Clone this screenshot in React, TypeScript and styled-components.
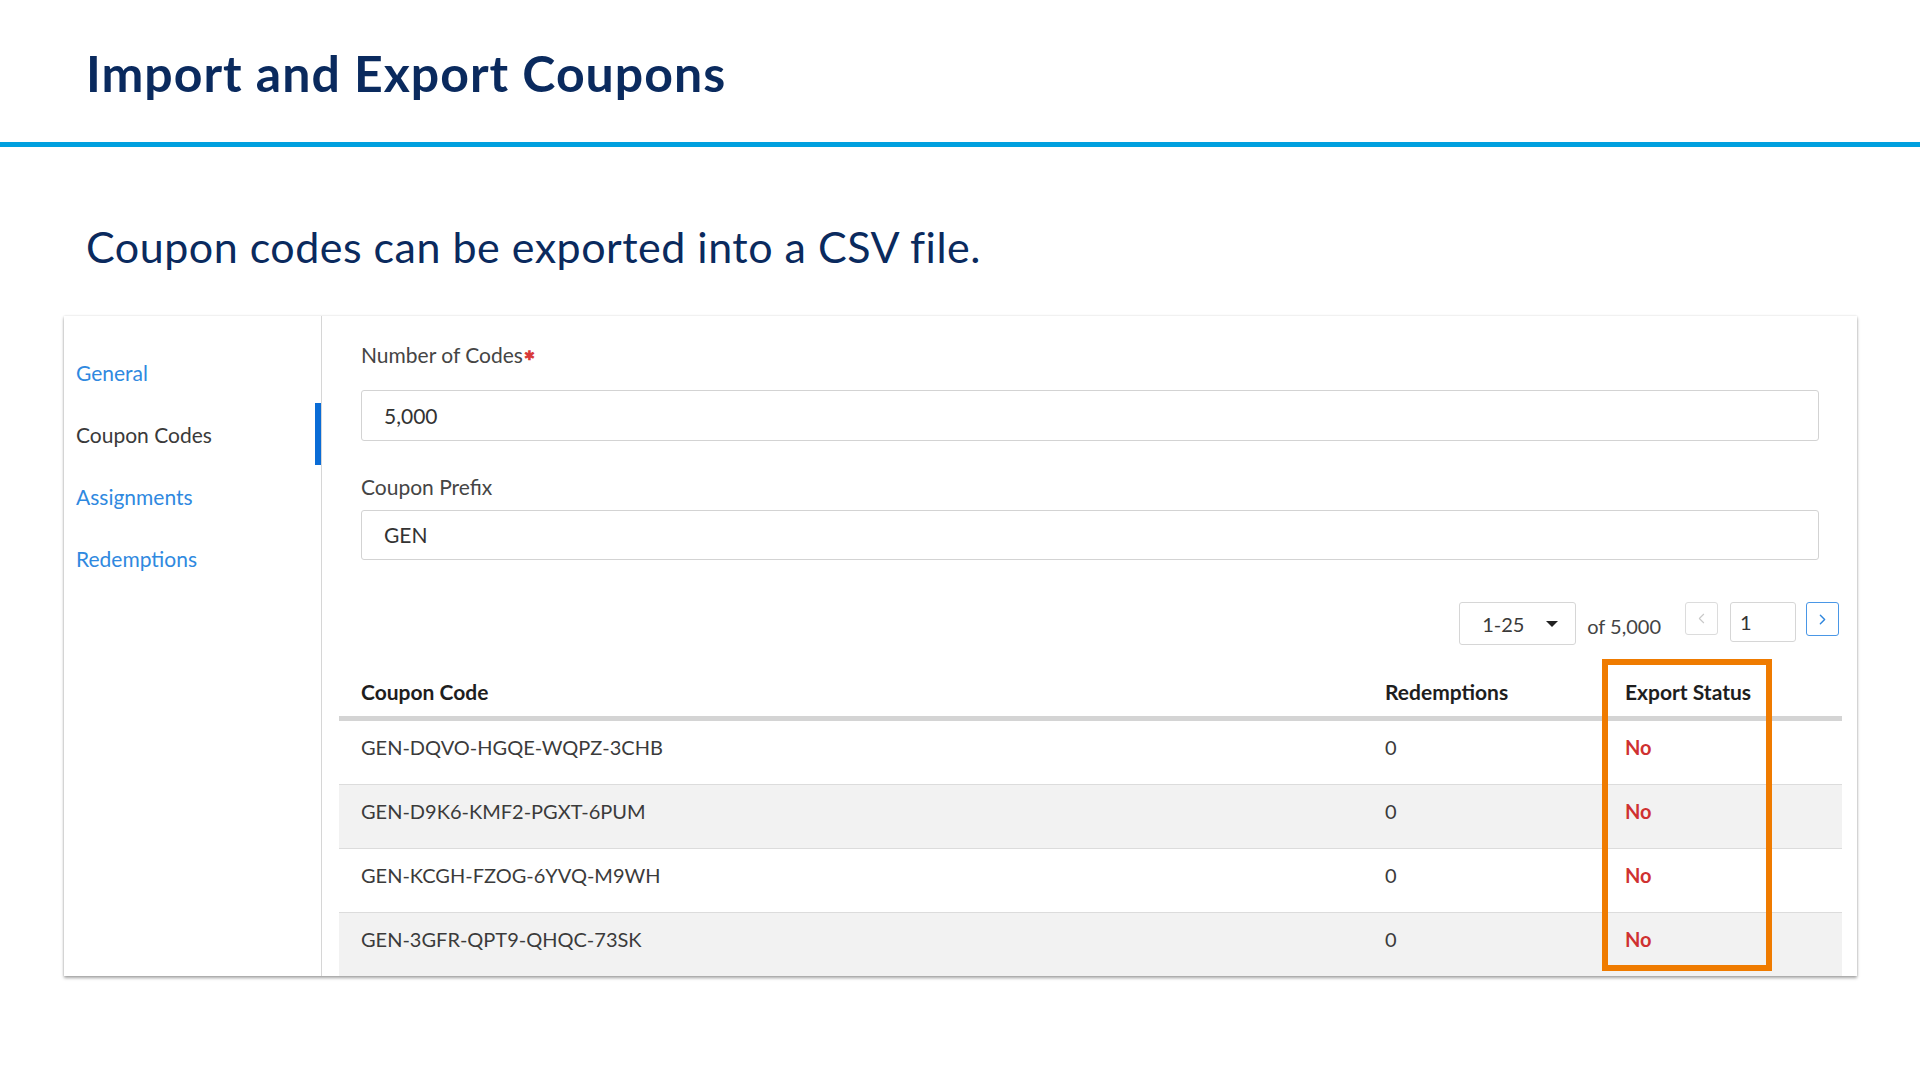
import React from "react";
import styled, { createGlobalStyle } from "styled-components";
import { ChevronLeft, ChevronRight } from "lucide-react";

const GlobalStyle = createGlobalStyle`
  html, body {
    margin: 0;
    padding: 0;
    background: #ffffff;
  }
  body {
    font-family: Lato, "Liberation Sans", sans-serif;
  }
`;

const Page = styled.div`
  width: 1920px;
  height: 1080px;
  overflow: hidden;
  background: #ffffff;
`;

const Header = styled.header`
  box-sizing: border-box;
  height: 147px;
  padding: 43px 0 0 86px;
  border-bottom: 5px solid #00a0df;
`;

const Title = styled.h1`
  margin: 0;
  font-size: 50px;
  line-height: 60px;
  font-weight: 700;
  letter-spacing: 1px;
  color: #0a2a5e;
`;

const Lead = styled.p`
  margin: 74px 0 0 86px;
  font-size: 43px;
  line-height: 52px;
  letter-spacing: 0.5px;
  color: #0a2a5e;
`;

const Card = styled.section`
  display: flex;
  box-sizing: border-box;
  width: 1793px;
  height: 660px;
  margin: 43px 0 0 64px;
  background: #ffffff;
  box-shadow: 0 2px 3px rgba(0, 0, 0, 0.35), 0 0 2px rgba(0, 0, 0, 0.12);
`;

const Sidebar = styled.nav`
  box-sizing: border-box;
  width: 258px;
  padding-top: 25px;
  border-right: 1px solid #d6d6d6;
`;

const NavItem = styled.div<{ $active?: boolean }>`
  box-sizing: border-box;
  height: 62px;
  display: flex;
  align-items: center;
  padding-left: 12px;
  font-size: 21px;
  color: ${({ $active }) => ($active ? "#3a3a3a" : "#2f89e0")};
  border-right: 6px solid ${({ $active }) => ($active ? "#0a6cd6" : "transparent")};
`;

const Main = styled.div`
  flex: 1;
  display: flex;
  flex-direction: column;
  padding: 27px 15px 0 17px;
`;

const FieldLabel = styled.label<{ $gap: number; $top?: number }>`
  display: block;
  margin: ${({ $top }) => $top ?? 0}px 0 ${({ $gap }) => $gap}px 22px;
  font-size: 21px;
  line-height: 24px;
  color: #454545;
`;

const Required = styled.span`
  color: #d83a3a;
  font-size: 13px;
  font-weight: 700;
  vertical-align: 3px;
  margin-left: 1px;
`;

const TextInput = styled.input`
  box-sizing: border-box;
  height: 52px;
  margin: 0 23px 0 22px;
  padding: 0 22px;
  border: 1px solid #d3d3d3;
  border-radius: 3px;
  font: inherit;
  font-size: 21px;
  color: #333333;
  background: #ffffff;
  outline: none;
`;

const Pager = styled.div`
  display: flex;
  justify-content: flex-end;
  align-items: flex-start;
  margin-top: 42px;
  padding-right: 3px;
`;

const RangeSelect = styled.div`
  box-sizing: border-box;
  width: 117px;
  height: 43px;
  display: flex;
  align-items: center;
  gap: 22px;
  padding-left: 22px;
  border: 1px solid #d6d6d6;
  border-radius: 3px;
  font-size: 20px;
  color: #3a3a3a;
`;

const Caret = styled.span`
  width: 0;
  height: 0;
  border-left: 6px solid transparent;
  border-right: 6px solid transparent;
  border-top: 6px solid #222222;
`;

const OfTotal = styled.span`
  margin: 0 24px 0 11px;
  padding-top: 3px;
  line-height: 43px;
  font-size: 20px;
  color: #444444;
`;

const PageButton = styled.div<{ $enabled?: boolean }>`
  box-sizing: border-box;
  width: 33px;
  height: ${({ $enabled }) => ($enabled ? 34 : 33)}px;
  display: flex;
  align-items: center;
  justify-content: center;
  border: 1px solid ${({ $enabled }) => ($enabled ? "#4a97e6" : "#dcdcdc")};
  border-radius: 3px;
  color: ${({ $enabled }) => ($enabled ? "#2f86dd" : "#c8c8c8")};
`;

const PageInput = styled.div`
  box-sizing: border-box;
  width: 66px;
  height: 40px;
  margin: 0 10px 0 12px;
  display: flex;
  align-items: center;
  padding-left: 9px;
  border: 1px solid #d6d6d6;
  border-radius: 3px;
  font-size: 20px;
  color: #333333;
`;

const Table = styled.div`
  position: relative;
`;

const HeadRow = styled.div`
  box-sizing: border-box;
  display: grid;
  grid-template-columns: 1fr 240px 239px;
  align-items: end;
  height: 73px;
  border-bottom: 5px solid #d4d4d4;
`;

const HeadCell = styled.div`
  padding: 0 22px 12px;
  font-size: 21px;
  line-height: 24px;
  font-weight: 700;
  color: #1e1e1e;
`;

const Row = styled.div<{ $shaded?: boolean; $first?: boolean }>`
  box-sizing: border-box;
  display: grid;
  grid-template-columns: 1fr 240px 239px;
  align-items: center;
  height: ${({ $first }) => ($first ? 63 : 64)}px;
  padding-bottom: 12px;
  border-top: ${({ $first }) => ($first ? "none" : "1px solid #dcdcdc")};
  background: ${({ $shaded }) => ($shaded ? "#f2f2f2" : "#ffffff")};
`;

const Cell = styled.div<{ $status?: boolean }>`
  padding: 0 22px;
  font-size: 20px;
  line-height: 24px;
  font-weight: ${({ $status }) => ($status ? 700 : 400)};
  color: ${({ $status }) => ($status ? "#cf3131" : "#3b3b3b")};
`;

// orange callout drawn around the export status column
const Highlight = styled.div`
  position: absolute;
  top: 11px;
  left: 1263px;
  width: 170px;
  height: 312px;
  box-sizing: border-box;
  border: 6px solid #ef7b00;
  pointer-events: none;
`;

const codes = [
  "GEN-DQVO-HGQE-WQPZ-3CHB",
  "GEN-D9K6-KMF2-PGXT-6PUM",
  "GEN-KCGH-FZOG-6YVQ-M9WH",
  "GEN-3GFR-QPT9-QHQC-73SK",
];

const navItems = ["General", "Coupon Codes", "Assignments", "Redemptions"];

export default function App() {
  return (
    <Page>
      <GlobalStyle />
      <Header>
        <Title>Import and Export Coupons</Title>
      </Header>
      <Lead>Coupon codes can be exported into a CSV file.</Lead>
      <Card>
        <Sidebar>
          {navItems.map((item) => (
            <NavItem key={item} $active={item === "Coupon Codes"}>
              {item}
            </NavItem>
          ))}
        </Sidebar>
        <Main>
          <FieldLabel $gap={23}>
            Number of Codes<Required>✱</Required>
          </FieldLabel>
          <TextInput readOnly value="5,000" />
          <FieldLabel $top={34} $gap={11}>
            Coupon Prefix
          </FieldLabel>
          <TextInput readOnly value="GEN" />
          <Pager>
            <RangeSelect>
              1-25
              <Caret />
            </RangeSelect>
            <OfTotal>of 5,000</OfTotal>
            <PageButton>
              <ChevronLeft size={17} strokeWidth={1.5} />
            </PageButton>
            <PageInput>1</PageInput>
            <PageButton $enabled>
              <ChevronRight size={17} strokeWidth={2} />
            </PageButton>
          </Pager>
          <Table>
            <HeadRow>
              <HeadCell>Coupon Code</HeadCell>
              <HeadCell>Redemptions</HeadCell>
              <HeadCell>Export Status</HeadCell>
            </HeadRow>
            {codes.map((code, i) => (
              <Row key={code} $first={i === 0} $shaded={i % 2 === 1}>
                <Cell>{code}</Cell>
                <Cell>0</Cell>
                <Cell $status>No</Cell>
              </Row>
            ))}
            <Highlight />
          </Table>
        </Main>
      </Card>
    </Page>
  );
}
